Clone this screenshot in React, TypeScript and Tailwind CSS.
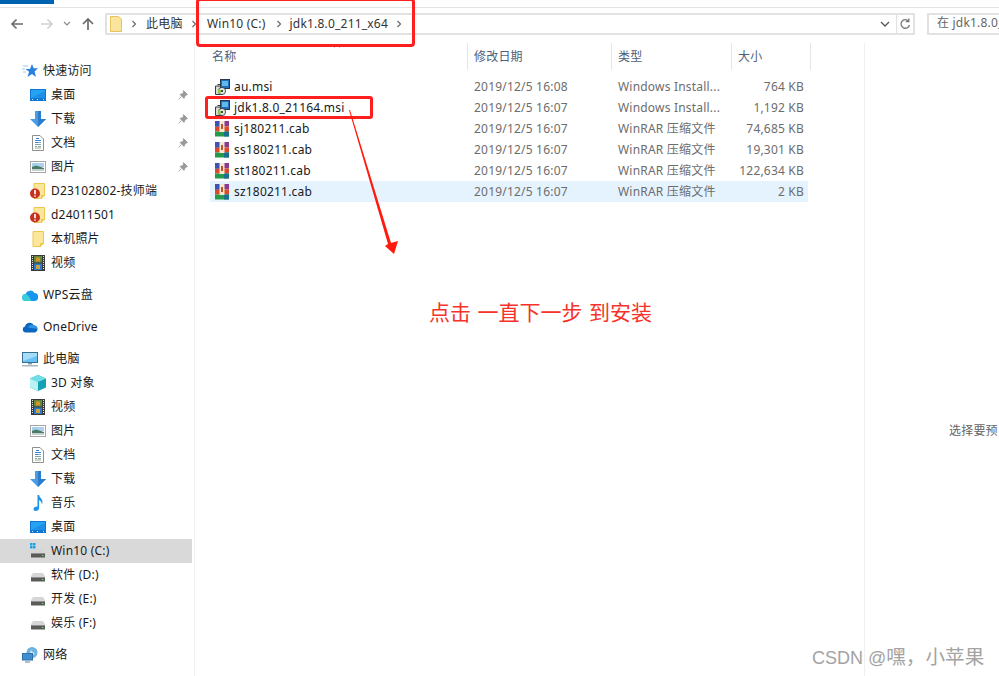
import type { ReactNode } from "react";

const Svg = ({ children, className = "w-4 h-4" }: { children: ReactNode; className?: string }) => (
  <svg viewBox="0 0 16 16" className={`${className} shrink-0`}>
    {children}
  </svg>
);

const DesktopIcon = () => (
  <Svg>
    <rect x="0" y="2" width="16" height="12" fill="#0f78d4" />
    <path d="M1 3h14v8L1 11z" fill="#25a3f2" />
    <path d="M1 11L15 4v7z" fill="#1b90e6" />
    <path d="M2 12.500h1M7 12.500h1M13 12.500h1" stroke="#cfeafd" />
  </Svg>
);

const DownloadIcon = () => (
  <Svg>
    <path d="M5 0h6v8h5l-8 8-8-8h5z" fill="#4a9be6" />
    <path d="M8 0h3v8h5l-8 8z" fill="#2b7ccc" />
  </Svg>
);

const DocIcon = () => (
  <Svg>
    <path d="M2.500.5h7.500l3.500 3.500v11.500h-11z" fill="#fff" stroke="#8f8f8f" />
    <path d="M6 3.500h3M5 5.500h6M5 7.500h3" stroke="#2f86d8" />
    <path d="M8 7.500h3M5 9.500h6M5 11.500h2" stroke="#7fa8b0" />
    <path d="M8 11.500h3M5 13h6" stroke="#9aa69a" />
  </Svg>
);

const PictureIcon = () => (
  <Svg>
    <rect x="0.500" y="2.500" width="15" height="11" fill="#fff" stroke="#a6a6a6" />
    <rect x="2" y="4" width="12" height="4" fill="#a9d0ec" />
    <path d="M2 8l4-1.500L14 9v3H2z" fill="#4c7a68" />
    <rect x="2" y="10" width="12" height="2" fill="#c2d2ca" />
  </Svg>
);

const FolderIcon = () => (
  <Svg>
    <path d="M3 .5h10.500v12l-3 3H3z" fill="#fce69c" stroke="#ecc750" />
    <path d="M10.500 15.500v-3h3" fill="#f6d36e" stroke="#ecc750" />
  </Svg>
);

const WarnFolderIcon = () => (
  <Svg>
    <path d="M4 .5h10.500v12l-3 3H4z" fill="#fce69c" stroke="#ecc750" />
    <path d="M11.500 15.500v-3h3" fill="#f6d36e" stroke="#ecc750" />
    <circle cx="5" cy="10.500" r="5" fill="#c5301f" />
    <path d="M5 7v4.200M5 12.500v1.300" stroke="#fff" strokeWidth="1.700" />
  </Svg>
);

const FilmIcon = () => (
  <Svg>
    <rect x="1" y="0" width="14" height="16" fill="#3a3a3a" />
    <path d="M2.500 1v14M13.500 1v14" stroke="#e2e2e2" strokeDasharray="1 1" />
    <rect x="4" y="1" width="8" height="6.500" fill="#5f8a3a" />
    <rect x="4" y="8.500" width="8" height="6.500" fill="#2f78d0" />
    <rect x="6" y="2.500" width="4" height="4" fill="#d9952c" />
    <rect x="6" y="10" width="4" height="4" fill="#c9a63a" />
  </Svg>
);

const CubeIcon = () => (
  <Svg>
    <path d="M8 0l8 3.500v9L8 16l-8-3.500v-9z" fill="#15a0b4" />
    <path d="M8 0l8 3.500L8 7 0 3.500z" fill="#6fdfe8" />
    <path d="M0 3.500L8 7v9l-8-3.500z" fill="#b8f2f3" />
  </Svg>
);

const StarIcon = () => (
  <Svg>
    <path d="M10 1l1.700 4.300H16l-3.400 3.100L14 14l-4-3-4.500 3 1.600-5.300L3.500 6h4.500z" fill="#2a80dc" />
    <path d="M1 3h5M0 6h3M1 9h3" stroke="#9cc8f0" />
  </Svg>
);

const WpsCloud = () => (
  <Svg>
    <path d="M4 14a3.500 3.500 0 0 1-.5-7A5 5 0 0 1 12.500 6 4 4 0 0 1 12 14z" fill="#1a95ee" />
    <path d="M4 14a3.500 3.500 0 0 1-.5-7c2 .3 4 3 6 7z" fill="#38d0d6" />
  </Svg>
);

const OneDriveCloud = () => (
  <Svg>
    <path d="M3.500 13.500A3 3 0 0 1 3 7.600 4.800 4.800 0 0 1 12 6.500a3.600 3.600 0 0 1 1 7z" fill="#0a66c0" />
    <path d="M6 8.500a4 4 0 0 1 6-2 3.600 3.600 0 0 1 3.500 3.500z" fill="#2b97e3" />
  </Svg>
);

const PcIcon = () => (
  <Svg>
    <rect x="0.500" y="1.500" width="15" height="10" fill="#66c2f4" stroke="#3a6f92" />
    <path d="M1 2h14v3L1 10z" fill="#a5dcfa" />
    <rect x="6" y="12" width="4" height="1.500" fill="#8aa0ae" />
    <rect x="0" y="14" width="16" height="1.500" fill="#a9b9c4" />
  </Svg>
);

const MusicIcon = () => (
  <Svg>
    <path d="M7.500 0h1.600c.3 2.500 3.400 3.600 3.400 7 0 1-.3 1.800-.8 2.500.2-2.400-1.200-3.600-2.600-4.200V13c0 1.800-1.600 3-3.400 3C4.200 16 3.500 15 3.500 14c0-1.500 1.800-2.800 4-2.500z" fill="#1d95e6" />
  </Svg>
);

const DriveIcon = ({ win = false }: { win?: boolean }) => (
  <Svg>
    {win && (
      <g fill="#1aa3e8">
        <rect x="0" y="0" width="2.500" height="2.500" />
        <rect x="3" y="0" width="2.500" height="2.500" />
        <rect x="0" y="3" width="2.500" height="2.500" />
        <rect x="3" y="3" width="2.500" height="2.500" />
      </g>
    )}
    <path d="M3 6h10l2.500 4h-15z" fill="#d6d6d6" />
    <rect x="1" y="10" width="14" height="4.500" fill="#5a5a5a" />
    <rect x="1" y="10" width="14" height="1" fill="#8f8f8f" />
    <rect x="12" y="12" width="1.500" height="1" fill="#5fe05f" />
  </Svg>
);

const NetworkIcon = () => (
  <Svg>
    <circle cx="10" cy="5.500" r="5.500" fill="#6fb1e0" />
    <path d="M7 1.500c2 1 2 3 1 4.500s3 2 5 1" fill="#d8ecf8" />
    <rect x="0.500" y="6.500" width="10" height="6.500" fill="#3f8fd0" stroke="#2d6fa8" />
    <rect x="3" y="14.500" width="5" height="1" fill="#6a7f8e" />
  </Svg>
);

const PinIcon = () => (
  <svg viewBox="0 0 10 10" className="w-[10px] h-[10px] shrink-0">
    <path d="M5.500.5l4 4-1.500.5-1.500 2-.5 1.500L2 4.500l1.500-.5 2-1.500zM3.500 6.500L.5 9.500" fill="#9a9a9a" stroke="#9a9a9a" strokeWidth="0.800" />
  </svg>
);

// Installer package: boxed window with a disc in the corner
const MsiIcon = () => (
  <Svg>
    <path d="M1.500 7h7v8.500h-7z" fill="#d9d9d9" stroke="#3a3a3a" />
    <path d="M3.500 5.500h5v3" fill="none" stroke="#3a3a3a" />
    <rect x="6.500" y="0.500" width="9" height="9" fill="#1f6fb8" stroke="#26384a" />
    <rect x="8" y="2" width="6" height="5" fill="#5fb8f0" />
    <circle cx="8" cy="12" r="3.600" fill="#e6e6e6" stroke="#2f2f2f" strokeWidth="0.800" />
    <path d="M8 12L5 9.800A3.600 3.600 0 0 0 5.500 14.800z" fill="#8fd045" />
    <circle cx="8" cy="12" r="1" fill="#1a1a1a" />
  </Svg>
);

const RarIcon = () => (
  <Svg>
    <rect x="1" y="0" width="14" height="5.500" fill="#8a3a90" />
    <rect x="1" y="5.500" width="14" height="5" fill="#dd4a2a" />
    <rect x="1" y="10.500" width="14" height="5" fill="#249a4a" />
    <rect x="1" y="0" width="5" height="5.500" fill="#3d55b0" />
    <rect x="10" y="10.500" width="5" height="5" fill="#1d6f8f" />
    <rect x="5.500" y="0" width="5" height="11" fill="#f6e8d0" />
    <rect x="7" y="3" width="2" height="5" fill="#b8552a" />
  </Svg>
);

const Chevron = ({ className = "" }: { className?: string }) => (
  <svg viewBox="0 0 6 8" className={`w-[6px] h-2 shrink-0 ${className}`}>
    <path d="M1.500 1l3 3-3 3" fill="none" stroke="#6b6b6b" strokeWidth="1.200" />
  </svg>
);

type NavItem = { label: string; icon: ReactNode; pin?: boolean; top?: boolean; gap?: boolean; active?: boolean };

const navItems: NavItem[] = [
  { label: "快速访问", icon: <StarIcon />, top: true },
  { label: "桌面", icon: <DesktopIcon />, pin: true },
  { label: "下载", icon: <DownloadIcon />, pin: true },
  { label: "文档", icon: <DocIcon />, pin: true },
  { label: "图片", icon: <PictureIcon />, pin: true },
  { label: "D23102802-技师端", icon: <WarnFolderIcon /> },
  { label: "d24011501", icon: <WarnFolderIcon /> },
  { label: "本机照片", icon: <FolderIcon /> },
  { label: "视频", icon: <FilmIcon /> },
  { label: "WPS云盘", icon: <WpsCloud />, top: true, gap: true },
  { label: "OneDrive", icon: <OneDriveCloud />, top: true, gap: true },
  { label: "此电脑", icon: <PcIcon />, top: true, gap: true },
  { label: "3D 对象", icon: <CubeIcon /> },
  { label: "视频", icon: <FilmIcon /> },
  { label: "图片", icon: <PictureIcon /> },
  { label: "文档", icon: <DocIcon /> },
  { label: "下载", icon: <DownloadIcon /> },
  { label: "音乐", icon: <MusicIcon /> },
  { label: "桌面", icon: <DesktopIcon /> },
  { label: "Win10 (C:)", icon: <DriveIcon win />, active: true },
  { label: "软件 (D:)", icon: <DriveIcon /> },
  { label: "开发 (E:)", icon: <DriveIcon /> },
  { label: "娱乐 (F:)", icon: <DriveIcon /> },
  { label: "网络", icon: <NetworkIcon />, top: true, gap: true },
];

const files = [
  { name: "au.msi", date: "2019/12/5 16:08", type: "Windows Install...", size: "764 KB", msi: true },
  { name: "jdk1.8.0_21164.msi", date: "2019/12/5 16:07", type: "Windows Install...", size: "1,192 KB", msi: true },
  { name: "sj180211.cab", date: "2019/12/5 16:07", type: "WinRAR 压缩文件", size: "74,685 KB" },
  { name: "ss180211.cab", date: "2019/12/5 16:07", type: "WinRAR 压缩文件", size: "19,301 KB" },
  { name: "st180211.cab", date: "2019/12/5 16:07", type: "WinRAR 压缩文件", size: "122,634 KB" },
  { name: "sz180211.cab", date: "2019/12/5 16:07", type: "WinRAR 压缩文件", size: "2 KB", selected: true },
];

export default function App() {
  return (
    <div className="relative w-[999px] h-[676px] overflow-hidden bg-white text-[12px] leading-4 tracking-[0.2px] text-[#1a1a1a] font-['Noto_Sans','Noto_Sans_CJK_SC',sans-serif]">
      {/* Ribbon remainder */}
      <div className="h-[8px] border-b border-[#e3e3e3]">
        <div className="w-[54px] h-[4px] bg-[#0063b1]" />
      </div>

      {/* Navigation + address row */}
      <div className="flex items-center h-[22px] mt-[5px]">
        <div className="flex items-center w-[105px] shrink-0">
          <svg viewBox="0 0 14 12" className="w-[14px] h-3 ml-[10px]">
            <path d="M13 6H2M6.500 1.500L2 6l4.500 4.500" fill="none" stroke="#6b6b6b" strokeWidth="1.600" />
          </svg>
          <svg viewBox="0 0 14 12" className="w-[14px] h-3 ml-4">
            <path d="M1 6h11M7.500 1.500L12 6l-4.500 4.500" fill="none" stroke="#cfcfcf" strokeWidth="1.600" />
          </svg>
          <svg viewBox="0 0 8 6" className="w-2 h-[6px] ml-[9px]">
            <path d="M1 1l3 3 3-3" fill="none" stroke="#8a8a8a" strokeWidth="1.200" />
          </svg>
          <svg viewBox="0 0 14 14" className="w-[14px] h-[14px] ml-[10px]">
            <path d="M7 13V2M2 7l5-5 5 5" fill="none" stroke="#6b6b6b" strokeWidth="1.700" />
          </svg>
        </div>
        <div className="flex items-center w-[810px] h-[22px] border-2 border-[#e2e2e2] text-[#333] shrink-0">
          <svg viewBox="0 0 12 16" className="w-3 h-4 ml-[3px] shrink-0">
            <path d="M.5.500h8l3 2.500v12.500H.5z" fill="#fbe59e" stroke="#e8c35a" />
          </svg>
          <Chevron className="ml-[9px]" />
          <span className="ml-[9px] w-[37px]">此电脑</span>
          <Chevron className="ml-[8px]" />
          <span className="ml-[10px]">Win10 (C:)</span>
          <Chevron className="ml-[10px]" />
          <span className="ml-[8px]">jdk1.8.0_211_x64</span>
          <Chevron className="ml-[8px]" />
          <svg viewBox="0 0 10 6" className="w-[10px] h-[6px] ml-auto mr-[2px]">
            <path d="M1 1l4 4 4-4" fill="none" stroke="#555" strokeWidth="1.300" />
          </svg>
          <div className="ml-1 w-[17px] h-full border-l border-[#e2e2e2] flex items-center justify-center">
            <svg viewBox="0 0 12 12" className="w-3 h-3">
              <path d="M9.500 3A4.300 4.300 0 1 0 10.500 7M9.800 .5V3.500H6.800" fill="none" stroke="#777" strokeWidth="1.300" />
            </svg>
          </div>
        </div>
        <div className="ml-3 flex-1 h-[22px] border-2 border-r-0 border-[#e2e2e2] pl-2 text-[#666] whitespace-nowrap overflow-hidden">
          在 jdk1.8.0_
        </div>
      </div>

      <div className="flex h-[641px] mt-[8px]">
        {/* Navigation pane */}
        <aside className="w-[195px] shrink-0 border-r border-[#f0f0f0] pt-[16px]">
          {navItems.map((item, i) => (
            <div
              key={i}
              className={`flex items-center h-6 w-[192px] ${item.top ? "pl-[22px]" : "pl-[30px]"} ${item.gap ? "mt-2" : ""} ${item.active ? "bg-[#d9d9d9]" : ""}`}
            >
              {item.icon}
              <span className="ml-[5px] whitespace-nowrap">{item.label}</span>
              {item.pin && (
                <span className="ml-auto mr-[4px]">
                  <PinIcon />
                </span>
              )}
            </div>
          ))}
        </aside>

        {/* File list */}
        <main className="w-[670px] shrink-0 border-r border-[#f0f0f0] pl-[15px]">
          <div className="relative flex h-[27px] items-center text-[#4c607a] w-[602px]">
            {/* sort caret sits above the name column */}
            <svg viewBox="0 0 8 4" className="absolute left-[123px] top-[1px] w-2 h-1">
              <path d="M1 3.500L4 .8l3 2.700" fill="none" stroke="#9a9a9a" />
            </svg>
            <div className="w-[257px] pl-[2px]">名称</div>
            <div className="w-[144px] h-full flex items-center pl-[6px] border-l border-[#e5e5e5]">修改日期</div>
            <div className="w-[120px] h-full flex items-center pl-[6px] border-l border-[#e5e5e5]">类型</div>
            <div className="w-[80px] h-full flex items-center pl-[6px] border-x border-[#e5e5e5]">大小</div>
          </div>
          <div className="mt-[6px]">
            {files.map((f) => (
              <div key={f.name} className={`flex items-center h-[21px] w-[598px] ${f.selected ? "bg-[#e5f3ff]" : ""}`}>
                <div className="w-[257px] flex items-center pl-[4px]">
                  {f.msi ? <MsiIcon /> : <RarIcon />}
                  <span className="ml-1 text-[#1a1a1a]">{f.name}</span>
                </div>
                <div className="w-[144px] pl-[7px] text-[#6d6d6d]">{f.date}</div>
                <div className="w-[120px] pl-[7px] text-[#6d6d6d] whitespace-nowrap">{f.type}</div>
                <div className="w-[73px] text-right text-[#6d6d6d]">{f.size}</div>
              </div>
            ))}
          </div>
        </main>

        {/* Preview pane */}
        <section className="flex-1 flex items-center pl-[84px] overflow-hidden">
          <span className="whitespace-nowrap text-[#666] mt-[134px]">选择要预</span>
        </section>
      </div>

      {/* Annotations on top of the window */}
      <div className="absolute left-[196px] top-[-2px] w-[219px] h-[49px] border-[3px] border-[#ff1f1f] rounded-[4px]" />
      <div className="absolute left-[205px] top-[96px] w-[168px] h-[23px] border-[3px] border-[#ff1f1f] rounded-[3px]" />
      <svg viewBox="0 0 999 676" className="absolute inset-0 w-[999px] h-[676px] pointer-events-none">
        <polygon points="349,110 350,110 391,243 398,241 394,254 385,246 388,244" fill="#ff1a0d" />
      </svg>
      <div className="absolute left-[429px] top-[297px] text-[21px] tracking-normal leading-[30px] text-[#f5332a] whitespace-nowrap [word-spacing:1px]">
        点击 一直下一步 到安装
      </div>
      <div className="absolute left-[812px] top-[644px] text-[18px] tracking-normal leading-[26px] text-[#a3a3a3] whitespace-nowrap font-['Liberation_Sans','Noto_Sans_CJK_SC',sans-serif]">
        CSDN @<span className="text-[19.6px]">嘿，小苹果</span>
      </div>
    </div>
  );
}
